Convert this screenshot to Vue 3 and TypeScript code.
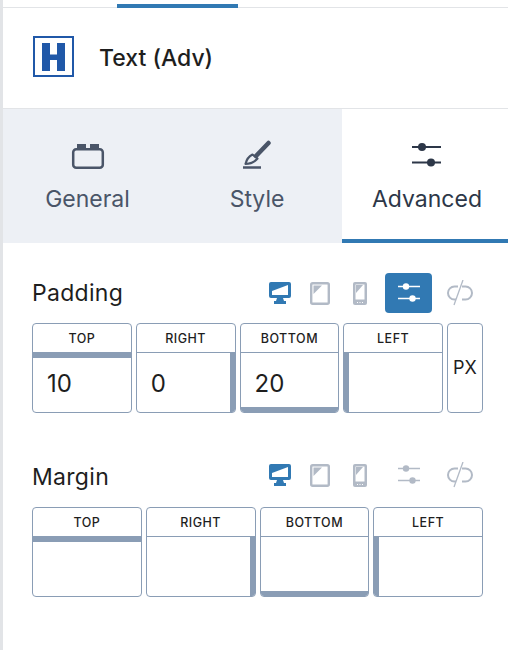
<script setup lang="ts">
interface Side {
  label: string
  value: string
  edge: 'top' | 'right' | 'bottom' | 'left'
}

const paddingSides: Side[] = [
  { label: 'TOP', value: '10', edge: 'top' },
  { label: 'RIGHT', value: '0', edge: 'right' },
  { label: 'BOTTOM', value: '20', edge: 'bottom' },
  { label: 'LEFT', value: '', edge: 'left' },
]

const marginSides: Side[] = [
  { label: 'TOP', value: '', edge: 'top' },
  { label: 'RIGHT', value: '', edge: 'right' },
  { label: 'BOTTOM', value: '', edge: 'bottom' },
  { label: 'LEFT', value: '', edge: 'left' },
]
</script>

<template>
  <div class="panel">
    <div class="top-strip"><span class="top-bar"></span></div>

    <header class="block-head">
      <svg class="logo" width="41" height="41" viewBox="0 0 41 41" aria-hidden="true">
        <rect x="1" y="1" width="39" height="39" fill="none" stroke="#2058a8" stroke-width="2" />
        <path d="M9 7h8v11.500h7V7h8v28h-8V24h-7v11H9z" fill="#2058a8" />
      </svg>
      <span class="block-name">Text (Adv)</span>
    </header>

    <nav class="tabs">
      <div class="tab">
        <svg width="36" height="34" viewBox="0 0 36 34" aria-hidden="true">
          <path d="M7 5h9v4H7zM20 5h9v4h-9z" fill="#4a5568" />
          <rect x="3.200" y="10.200" width="29.600" height="18.600" rx="3" fill="none" stroke="#4a5568" stroke-width="2.500" />
        </svg>
        <span>General</span>
      </div>
      <div class="tab">
        <svg width="36" height="34" viewBox="0 0 36 34" aria-hidden="true">
          <path d="M29.500 4 17 17" stroke="#4a5568" stroke-width="4.500" stroke-linecap="round" fill="none" />
          <path d="M13.500 15.500c-4 2-6 5-7 9.500 5 0 9-2 12-5.500z" fill="none" stroke="#4a5568" stroke-width="2.200" stroke-linejoin="round" />
          <path d="M4 28.500h18" stroke="#4a5568" stroke-width="2.500" />
        </svg>
        <span>Style</span>
      </div>
      <div class="tab active">
        <svg width="36" height="34" viewBox="0 0 36 34" aria-hidden="true">
          <path d="M3 8h29M3 23.500h29" stroke="#2d3748" stroke-width="2.200" />
          <circle cx="13" cy="8" r="4" fill="#2d3748" />
          <circle cx="22" cy="23.500" r="4" fill="#2d3748" />
        </svg>
        <span>Advanced</span>
      </div>
    </nav>

    <section class="group first">
      <div class="group-head">
        <h2>Padding</h2>
        <div class="device">
          <svg width="22" height="22" viewBox="0 0 22 22" aria-hidden="true">
            <path d="M2 0h18a2 2 0 0 1 2 2v12a2 2 0 0 1-2 2h-6l1 3h2v3H5v-3h2l1-3H2a2 2 0 0 1-2-2V2a2 2 0 0 1 2-2z" fill="#3179b3" />
            <rect x="3" y="3" width="16" height="10" fill="#fff" />
            <path d="M3 3h16L3 9z" fill="#3179b3" />
          </svg>
        </div>
        <div class="device">
          <svg width="20" height="23" viewBox="0 0 20 23" aria-hidden="true">
            <rect x="1.200" y="1.200" width="17.600" height="20.600" rx="1.500" fill="#fff" stroke="#b2bac6" stroke-width="2.400" />
            <path d="M3.500 3.500H12L3.500 12z" fill="#b2bac6" />
          </svg>
        </div>
        <div class="device">
          <svg width="14" height="23" viewBox="0 0 14 23" aria-hidden="true">
            <rect width="14" height="23" rx="2" fill="#b2bac6" />
            <rect x="2.500" y="2.500" width="9" height="15" fill="#fff" />
            <path d="M3 3h7l-7 8z" fill="#b2bac6" />
            <path d="M4 20.500h1M6.500 20.500h1M9 20.500h1" stroke="#fff" stroke-width="1" />
          </svg>
        </div>
        <button class="sliders-btn" type="button">
          <svg width="22" height="20" viewBox="0 0 22 20" aria-hidden="true">
            <path d="M0 3.500h22M0 15.500h22" stroke="#fff" stroke-width="1.600" />
            <circle cx="8" cy="3.500" r="3.200" fill="#fff" />
            <circle cx="14.500" cy="15.500" r="3.200" fill="#fff" />
          </svg>
        </button>
        <div class="device link">
          <svg width="26" height="26" viewBox="0 0 26 26" aria-hidden="true">
            <path d="M11 6.500H7.500a6.500 6.500 0 0 0 0 13H9M15 6.500h3.500a6.500 6.500 0 0 1 0 13H15" fill="none" stroke="#b2bac6" stroke-width="2" />
            <path d="M16 0 7 25" stroke="#b2bac6" stroke-width="1.300" />
          </svg>
        </div>
      </div>

      <div class="fields">
        <div v-for="side in paddingSides" :key="side.label" class="field" :class="side.edge">
          <div class="field-label">{{ side.label }}</div>
          <div class="field-value">{{ side.value }}</div>
        </div>
        <div class="unit">PX</div>
      </div>
    </section>

    <section class="group second">
      <div class="group-head">
        <h2>Margin</h2>
        <div class="device">
          <svg width="22" height="22" viewBox="0 0 22 22" aria-hidden="true">
            <path d="M2 0h18a2 2 0 0 1 2 2v12a2 2 0 0 1-2 2h-6l1 3h2v3H5v-3h2l1-3H2a2 2 0 0 1-2-2V2a2 2 0 0 1 2-2z" fill="#3179b3" />
            <rect x="3" y="3" width="16" height="10" fill="#fff" />
            <path d="M3 3h16L3 9z" fill="#3179b3" />
          </svg>
        </div>
        <div class="device">
          <svg width="20" height="23" viewBox="0 0 20 23" aria-hidden="true">
            <rect x="1.200" y="1.200" width="17.600" height="20.600" rx="1.500" fill="#fff" stroke="#b2bac6" stroke-width="2.400" />
            <path d="M3.500 3.500H12L3.500 12z" fill="#b2bac6" />
          </svg>
        </div>
        <div class="device">
          <svg width="14" height="23" viewBox="0 0 14 23" aria-hidden="true">
            <rect width="14" height="23" rx="2" fill="#b2bac6" />
            <rect x="2.500" y="2.500" width="9" height="15" fill="#fff" />
            <path d="M3 3h7l-7 8z" fill="#b2bac6" />
            <path d="M4 20.500h1M6.500 20.500h1M9 20.500h1" stroke="#fff" stroke-width="1" />
          </svg>
        </div>
        <div class="plain-sliders">
          <svg width="22" height="20" viewBox="0 0 22 20" aria-hidden="true">
            <path d="M0 3.500h22M0 15.500h22" stroke="#b2bac6" stroke-width="1.600" />
            <circle cx="8" cy="3.500" r="3.200" fill="#b2bac6" />
            <circle cx="14.500" cy="15.500" r="3.200" fill="#b2bac6" />
          </svg>
        </div>
        <div class="device link">
          <svg width="26" height="26" viewBox="0 0 26 26" aria-hidden="true">
            <path d="M11 6.500H7.500a6.500 6.500 0 0 0 0 13H9M15 6.500h3.500a6.500 6.500 0 0 1 0 13H15" fill="none" stroke="#b2bac6" stroke-width="2" />
            <path d="M16 0 7 25" stroke="#b2bac6" stroke-width="1.300" />
          </svg>
        </div>
      </div>

      <div class="fields">
        <div v-for="side in marginSides" :key="side.label" class="field" :class="side.edge">
          <div class="field-label">{{ side.label }}</div>
          <div class="field-value">{{ side.value }}</div>
        </div>
      </div>
    </section>
  </div>
</template>

<style scoped>
.panel {
  width: 508px;
  height: 650px;
  overflow: hidden;
  box-sizing: border-box;
  border-left: 3px solid #e2e4e7;
  background: #fff;
  font-family: Inter, "Liberation Sans", sans-serif;
  color: #1e1e1e;
}

.top-strip {
  height: 8px;
  box-sizing: border-box;
  padding: 4px 0 0 114px;
  border-bottom: 1px solid #e2e4e7;
}

.top-bar {
  display: block;
  width: 121px;
  height: 4px;
  background: #3179b3;
}

.block-head {
  display: flex;
  align-items: center;
  height: 101px;
  box-sizing: border-box;
  padding: 0 0 4px 30px;
  border-bottom: 1px solid #e2e4e7;
}

.logo {
  flex: none;
}

.block-name {
  margin: 3px 0 0 25px;
  font-size: 23px;
  font-weight: 500;
}

.tabs {
  display: grid;
  grid-template-columns: 169px 170px 170px;
  height: 134px;
  background: #edf0f5;
}

.tab {
  display: flex;
  flex-direction: column;
  align-items: center;
  height: 134px;
  box-sizing: border-box;
  padding-top: 30px;
  font-size: 23px;
  line-height: 27px;
  color: #4a5568;
}

.tab svg {
  flex: none;
  margin-bottom: 13px;
}

.tab.active {
  background: #fff;
  color: #2d3748;
  border-bottom: 4px solid #3179b3;
}

.group {
  padding: 0 25px 0 29px;
}

.group.first {
  padding-top: 30px;
}

.group.second {
  padding-top: 42px;
}

.group-head {
  display: flex;
  align-items: center;
  height: 40px;
  margin-bottom: 10px;
}

.second .group-head {
  margin-bottom: 12px;
}

.group-head h2 {
  flex: 1;
  margin: 0;
  font-size: 23px;
  font-weight: 400;
  letter-spacing: 0.3px;
  color: #1e1e1e;
}

.second .group-head h2 {
  padding-top: 3px;
}

.device {
  display: flex;
  align-items: center;
  justify-content: center;
  width: 40px;
}

.device.link {
  width: 46px;
  margin-left: 5px;
}

.sliders-btn {
  display: flex;
  align-items: center;
  justify-content: center;
  width: 47px;
  height: 40px;
  margin-left: 5px;
  padding: 0;
  border: 0;
  border-radius: 4px;
  background: #3179b3;
}

.plain-sliders {
  display: flex;
  justify-content: center;
  width: 47px;
  margin-left: 5px;
}

.fields {
  display: flex;
  gap: 4px;
}

.field {
  position: relative;
  flex: 1;
  height: 90px;
  box-sizing: border-box;
  overflow: hidden;
  border: 1px solid #8a9db5;
  border-radius: 4px;
}

.field-label {
  height: 29px;
  box-sizing: border-box;
  border-bottom: 1px solid #8a9db5;
  font-size: 12.500px;
  font-weight: 500;
  line-height: 29px;
  letter-spacing: 0.5px;
  text-align: center;
}

.field-value {
  height: 59px;
  box-sizing: border-box;
  padding: 15px 0 0 14px;
  font-size: 24px;
  line-height: 32px;
}

.field.top .field-value {
  border-top: 5px solid #8a9db5;
  padding-top: 10px;
}

.field.right .field-value {
  border-right: 5px solid #8a9db5;
}

.field.bottom .field-value {
  border-bottom: 5px solid #8a9db5;
}

.field.left .field-value {
  border-left: 5px solid #8a9db5;
}

.unit {
  flex: none;
  width: 36px;
  height: 90px;
  box-sizing: border-box;
  border: 1px solid #8a9db5;
  border-radius: 4px;
  font-size: 18px;
  line-height: 88px;
  text-align: center;
}
</style>
